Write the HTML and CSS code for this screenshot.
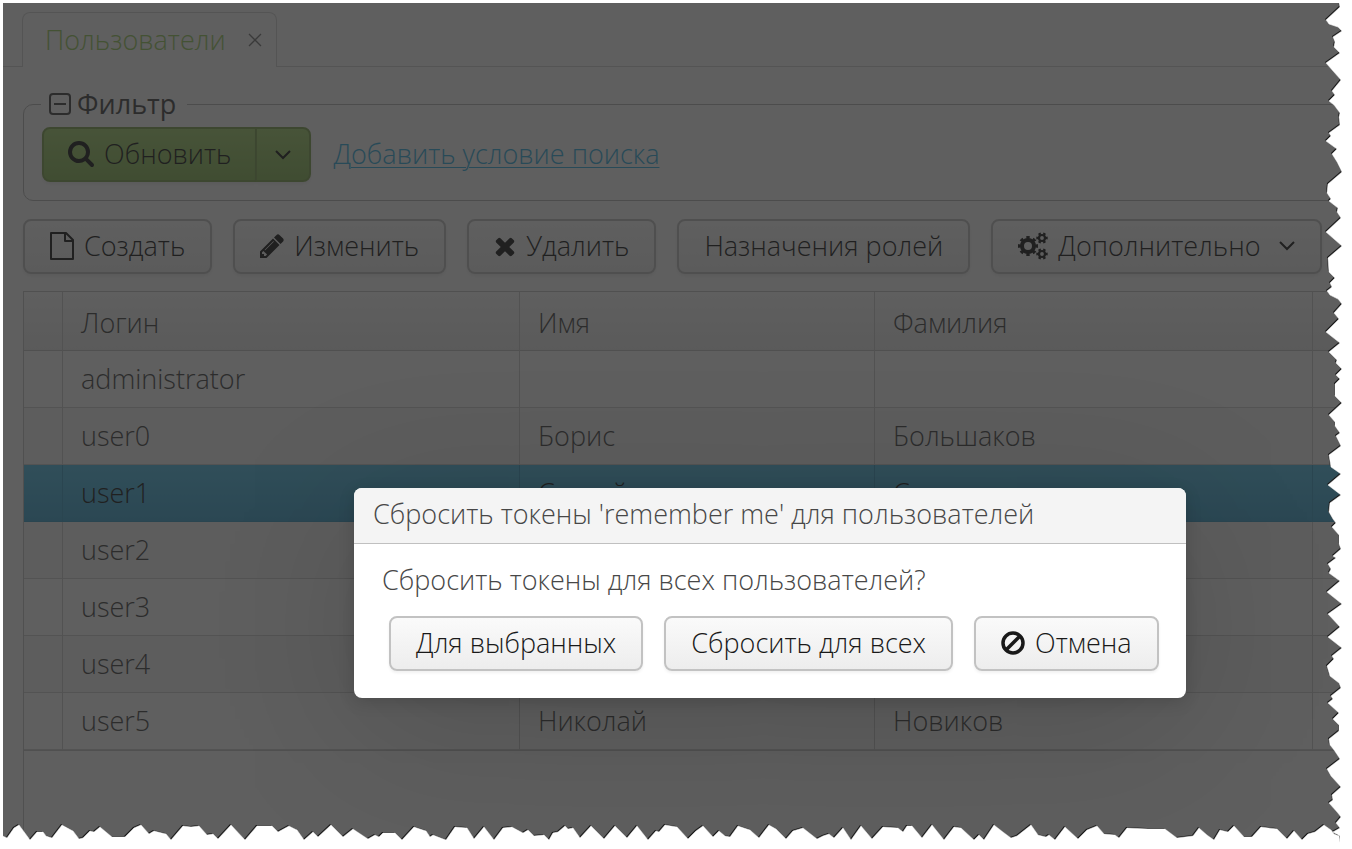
FILE: index.html
```
<!DOCTYPE html>
<html lang="ru">
<head>
    <meta charset="UTF-8">
    <meta name="viewport" content="width=device-width, initial-scale=1.0">
    <title>Пользователи</title>
    <link rel="stylesheet" href="styles.css">
</head>
<body>
    <div class="app">
        <div class="tabs">
            <div class="tab">
                <a href="#users" class="tab-title">Пользователи</a>
                <button type="button" class="tab-close" aria-label="Закрыть">
                    <svg width="14" height="14" viewBox="0 0 14 14"><path d="M1 1L13 13M13 1L1 13" fill="none" stroke="currentColor" stroke-width="1.3"/></svg>
                </button>
            </div>
        </div>

        <main class="content" id="users">
            <fieldset class="filter">
                <legend>
                    <button type="button" class="toggle" aria-label="Свернуть">
                        <svg width="22" height="22" viewBox="0 0 22 22"><rect x="1" y="1" width="20" height="20" rx="3" fill="none" stroke="currentColor" stroke-width="2"/><path d="M5 11H17" stroke="currentColor" stroke-width="2"/></svg>
                    </button>
                    <span>Фильтр</span>
                </legend>
                <div class="split">
                    <button type="button" class="btn btn-green">
                        <svg width="26" height="28" viewBox="0 64 1664 1792"><path fill="currentColor" d="M1152 832q0-185-131.500-316.500T704 384 387.500 515.500 256 832t131.500 316.500T704 1280t316.500-131.500T1152 832zm512 832q0 52-38 90t-90 38q-54 0-90-38l-343-342q-179 124-399 124-143 0-273.500-55.500t-225-150-150-225T0 832t55.500-273.500 150-225 225-150T704 128t273.500 55.500 225 150 150 225T1408 832q0 220-124 399l343 343q37 37 37 90z"/></svg>
                        Обновить
                    </button>
                    <button type="button" class="btn btn-green btn-arrow" aria-label="Ещё">
                        <svg width="16" height="10" viewBox="0 0 16 10"><path d="M1 1L8 8L15 1" fill="none" stroke="currentColor" stroke-width="2"/></svg>
                    </button>
                </div>
                <a href="#add" class="add-link">Добавить условие поиска</a>
            </fieldset>

            <div class="toolbar">
                <button type="button" class="btn">
                    <svg width="24" height="28" viewBox="0 0 24 28"><path d="M2 1H16L23 8V27H1V1ZM15 1V9H23" fill="none" stroke="currentColor" stroke-width="2" stroke-linejoin="round"/></svg>
                    Создать
                </button>
                <button type="button" class="btn">
                    <svg width="24" height="28" viewBox="0 0 1536 1792"><path fill="currentColor" d="M363 1536l91-91-235-235-91 91v107h128v128h107zm523-928q0-22-22-22-10 0-17 7l-542 542q-7 7-7 17 0 22 22 22 10 0 17-7l542-542q7-7 7-17zm-54-192l416 416-832 832H0v-416zm683 96q0 53-37 90l-166 166-416-416 166-165q36-38 90-38 53 0 91 38l235 234q37 39 37 91z"/></svg>
                    Изменить
                </button>
                <button type="button" class="btn">
                    <svg width="22" height="28" viewBox="0 0 1408 1792"><path fill="currentColor" d="M1298 1322q0 40-28 68l-136 136q-28 28-68 28t-68-28l-294-294-294 294q-28 28-68 28t-68-28l-136-136q-28-28-28-68t28-68l294-294-294-294q-28-28-28-68t28-68l136-136q28-28 68-28t68 28l294 294 294-294q28-28 68-28t68 28l136 136q28 28 28 68t-28 68l-294 294 294 294q28 28 28 68z"/></svg>
                    Удалить
                </button>
                <button type="button" class="btn">Назначения ролей</button>
                <button type="button" class="btn">
                    <svg width="30" height="28" viewBox="0 0 30 28" fill="none" stroke="currentColor">
                        <circle cx="10" cy="14" r="6" stroke-width="4"/>
                        <circle cx="10" cy="14" r="8.500" stroke-width="3" pathLength="16" stroke-dasharray="1" stroke-dashoffset="0.500"/>
                        <circle cx="24" cy="6" r="3" stroke-width="2.200"/>
                        <circle cx="24" cy="6" r="4.700" stroke-width="2" pathLength="12" stroke-dasharray="1" stroke-dashoffset="0.500"/>
                        <circle cx="24" cy="22" r="3" stroke-width="2.200"/>
                        <circle cx="24" cy="22" r="4.700" stroke-width="2" pathLength="12" stroke-dasharray="1" stroke-dashoffset="0.500"/>
                    </svg>
                    Дополнительно
                    <svg class="caret" width="16" height="10" viewBox="0 0 16 10"><path d="M1 1L8 8L15 1" fill="none" stroke="currentColor" stroke-width="2"/></svg>
                </button>
            </div>

            <div class="grid">
                <table>
                    <colgroup>
                        <col class="col-mark">
                        <col class="col-login">
                        <col class="col-name">
                        <col class="col-surname">
                        <col>
                    </colgroup>
                    <thead>
                        <tr><th></th><th>Логин</th><th>Имя</th><th>Фамилия</th><th></th></tr>
                    </thead>
                    <tbody>
                        <tr><td></td><td>administrator</td><td></td><td></td><td></td></tr>
                        <tr><td></td><td>user0</td><td>Борис</td><td>Большаков</td><td></td></tr>
                        <tr class="selected"><td></td><td>user1</td><td>Сергей</td><td>Самодолин</td><td></td></tr>
                        <tr><td></td><td>user2</td><td></td><td></td><td></td></tr>
                        <tr><td></td><td>user3</td><td></td><td></td><td></td></tr>
                        <tr><td></td><td>user4</td><td></td><td></td><td></td></tr>
                        <tr><td></td><td>user5</td><td>Николай</td><td>Новиков</td><td></td></tr>
                    </tbody>
                </table>
            </div>
        </main>

        <div class="curtain"></div>

        <div class="dialog" role="dialog" aria-labelledby="dialog-title">
            <h1 id="dialog-title">Сбросить токены 'remember me' для пользователей</h1>
            <div class="dialog-body">
                <p>Сбросить токены для всех пользователей?</p>
                <div class="dialog-buttons">
                    <button type="button" class="btn">Для выбранных</button>
                    <button type="button" class="btn">Сбросить для всех</button>
                    <button type="button" class="btn">
                        <svg width="24" height="24" viewBox="0 0 24 24"><g fill="none" stroke="currentColor" stroke-width="3.500"><circle cx="12" cy="12" r="10"/><path d="M5 19L19 5"/></g></svg>
                        Отмена
                    </button>
                </div>
            </div>
        </div>
    </div>

    <!-- torn paper edges -->
    <svg class="torn torn-right" width="32" height="846" viewBox="0 3 32 846" aria-hidden="true">
        <defs><path id="torn-r" d="M19 0L19 3 20 7 6 20 9 24 18 27 22 31 13 37 15 42 14 47 20 53 6 63 13 71 21 80 12 91 15 95 9 101 14 105 20 113 19 117 20 125 9 133 11 136 6 141 17 149 12 154 17 162 22 172 8 184 7 193 11 199 9 201 18 208 17 212 21 218 6 232 22 246 8 258 9 272 15 278 10 283 12 287 7 291 10 295 18 299 22 304 14 313 19 319 6 332 20 343 9 352 17 360 16 363 22 369 16 375 20 379 15 384 15 396 22 403 9 415 15 422 15 426 20 433 16 436 21 446 9 455 11 467 21 474 8 485 21 495 10 503 9 512 13 519 16 523 12 527 19 535 19 544 21 549 13 556 16 558 8 564 11 569 9 573 20 581 7 592 22 604 8 614 20 627 8 637 22 648 12 656 14 659 7 666 10 676 19 683 21 688 11 696 13 699 8 703 19 713 13 719 19 725 19 731 9 739 10 745 14 750 20 759 7 769 11 776 21 787 12 795 13 800 9 803 17 812 21 817 16 823 20 828 13 832 20 836 20 849H40V0Z"/></defs>
        <use href="#torn-r" class="torn-line" x="-1" y="-1"/>
        <use href="#torn-r" class="torn-paper"/>
    </svg>
    <svg class="torn torn-bottom" width="1349" height="30" viewBox="3 0 1349 30" aria-hidden="true">
        <defs><path id="torn-b" d="M0 17L3 17 7 19 14 9 19 6 30 21 37 13 43 13 46 17 52 19 62 6 73 12 79 20 83 19 90 12 94 13 100 8 112 18 125 18 134 9 141 6 149 15 154 12 166 15 171 21 183 7 191 8 199 7 207 16 213 15 218 20 231 6 245 21 257 7 272 7 278 13 289 7 297 11 304 21 313 13 318 18 331 6 343 18 353 10 368 20 375 16 379 18 383 14 395 14 402 21 414 8 426 12 430 18 433 16 446 21 455 8 467 9 474 20 484 8 494 21 503 9 512 8 523 14 528 11 534 17 544 16 549 21 553 14 558 13 565 7 568 10 573 9 580 19 591 7 604 20 615 7 627 19 637 7 648 21 656 12 659 13 665 6 677 8 688 20 696 12 703 7 713 18 719 12 725 17 730 18 738 7 750 11 759 19 769 6 776 10 786 20 793 12 803 9 817 20 823 17 829 15 834 19 843 9 851 21 861 7 872 20 883 8 898 9 903 13 907 7 912 7 922 19 932 6 944 21 954 8 961 9 974 21 979 16 984 21 994 6 1003 13 1011 19 1017 17 1031 6 1038 16 1046 18 1049 16 1055 21 1065 8 1078 20 1087 11 1097 7 1104 15 1115 16 1119 19 1127 9 1148 10 1165 10 1177 19 1193 17 1199 9 1207 16 1214 21 1220 11 1228 13 1234 7 1244 18 1252 18 1261 8 1277 10 1287 20 1294 12 1302 21 1308 15 1315 13 1324 6 1331 11 1334 15 1339 17 1341 30V40H0Z"/></defs>
        <use href="#torn-b" class="torn-line" x="-1" y="-1"/>
        <use href="#torn-b" class="torn-paper"/>
    </svg>
</body>
</html>
```
FILE: styles.css
```
* {
    box-sizing: border-box;
}
body {
    margin: 0;
    height: 100vh;
    padding: 3px 0 0 3px;
    background: #fff;
    color: #474747;
    font-family: "Open Sans", sans-serif;
    font-size: 27px;
    font-weight: 300;
    line-height: 36px;
    overflow: hidden;
    position: relative;
}
button {
    font: inherit;
    color: inherit;
    cursor: pointer;
}
svg {
    display: block;
    flex: none;
}
.app {
    position: relative;
    display: flex;
    flex-direction: column;
    height: 100%;
    background: #fafafa;
    overflow: hidden;
}

/* tabs */
.tabs {
    display: flex;
    height: 64px;
    padding: 9px 0 0 19px;
    border-bottom: 1px solid #d5d5d5;
}
.tab {
    display: flex;
    align-items: center;
    gap: 22px;
    height: 55px;
    padding: 0 14px 0 22px;
    background: #fafafa;
    border: 1px solid #d5d5d5;
    border-bottom: none;
    border-radius: 8px 8px 0 0;
}
.tab-title {
    color: #9acb62;
    text-decoration: none;
}
.tab-close {
    padding: 0;
    border: none;
    background: none;
    color: #777;
}

/* filter */
.content {
    display: flex;
    flex-direction: column;
    flex: 1;
    padding: 19px 0 0 20px;
}
.filter {
    display: flex;
    align-items: center;
    gap: 22px;
    margin: 0 -20px 0 0;
    padding: 5px 18px 18px;
    border: 1px solid #b8b8b8;
    border-radius: 10px;
}
.filter legend {
    display: flex;
    align-items: center;
    gap: 6px;
    margin-left: -1px;
    padding: 0 11px 0 8px;
    font-weight: 400;
}
.toggle {
    padding: 0;
    border: none;
    background: none;
}
.split {
    display: flex;
}
.add-link {
    padding-bottom: 2px;
    color: #38b1e0;
    text-decoration-thickness: 1px;
    text-underline-offset: 3px;
}

/* buttons */
.btn {
    display: flex;
    align-items: center;
    gap: 10px;
    height: 55px;
    padding: 0 25px 1px;
    border: 2px solid #c2c2c2;
    border-radius: 8px;
    background: linear-gradient(#fafafa, #ededed);
    box-shadow: 0 2px 3px rgba(0, 0, 0, 0.06);
    color: #191919;
    white-space: nowrap;
}
.btn-green {
    padding: 0 24px 1px;
    border-color: #82a554;
    border-right-width: 1px;
    border-radius: 8px 0 0 8px;
    background: linear-gradient(#a6d272, #8cb95a);
}
.btn-arrow {
    padding: 0 18px;
    border-left-width: 1px;
    border-right-width: 2px;
    border-radius: 0 8px 8px 0;
}
.caret {
    margin-left: 8px;
}
.toolbar {
    display: flex;
    gap: 21px;
    margin: 18px 0 17px;
}

/* table */
.grid {
    flex: 1;
    border: solid #c6c6c6;
    border-width: 1px 0 0 1px;
}
table {
    width: 100%;
    table-layout: fixed;
    border-collapse: separate;
    border-spacing: 0;
    border-bottom: 1px solid #c6c6c6;
}
.col-mark {
    width: 39px;
}
.col-login {
    width: 457px;
}
.col-name {
    width: 355px;
}
.col-surname {
    width: 438px;
}
th,
td {
    height: 57px;
    padding: 0 18px 1px;
    border-right: 1px solid #ccc;
    border-bottom: 1px solid #d0d0d0;
    font-weight: 300;
    text-align: left;
    white-space: nowrap;
}
th:first-child,
td:first-child {
    padding: 0;
}
th {
    height: 59px;
    padding-top: 4px;
    border-bottom-color: #c6c6c6;
    background: linear-gradient(#fafafa, #eaeaea);
}
tbody tr:nth-child(even) {
    background: #f4f4f4;
}
.selected td {
    border-right-color: #3d9fc4;
    border-bottom-color: #3d9fc4;
    background: linear-gradient(#54bfe6, #42a6d0);
    color: #1a1a1a;
}

/* modal */
.curtain {
    position: absolute;
    inset: 0;
    background: rgba(34, 34, 34, 0.72);
}
.dialog {
    position: absolute;
    top: 485px;
    left: 351px;
    background: #fff;
    border-radius: 8px;
    box-shadow: 0 4px 16px rgba(0, 0, 0, 0.15), 0 32px 160px rgba(0, 0, 0, 0.15);
}
.dialog h1 {
    margin: 0;
    padding: 8px 19px 11px;
    border-bottom: 1px solid #c0c0c0;
    border-radius: 8px 8px 0 0;
    background: #f4f4f4;
    font-size: 27px;
    font-weight: 300;
    line-height: 36px;
}
.dialog-body {
    padding: 18px 27px 27px 28px;
}
.dialog p {
    margin: 0 0 18px;
}
.dialog-buttons {
    display: flex;
    justify-content: flex-end;
    gap: 21px;
    padding-left: 7px;
}

/* torn edges */
.torn {
    position: absolute;
}
.torn-right {
    top: 3px;
    right: 0;
}
.torn-bottom {
    left: 3px;
    bottom: 0;
}
.torn-line {
    fill: #1c1c1c;
}
.torn-paper {
    fill: #fff;
    stroke: #fff;
    stroke-width: 1;
    stroke-opacity: 0.5;
}
```
